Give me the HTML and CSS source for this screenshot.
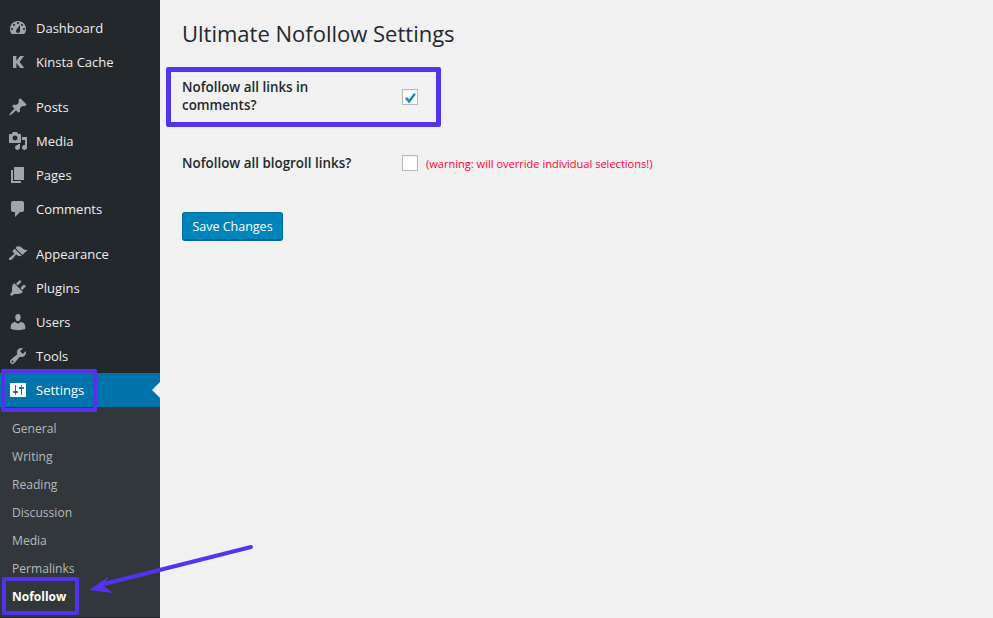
FILE: index.html
```html
<!DOCTYPE html>
<html lang="en">
<head>
<meta charset="utf-8">
<title>Ultimate Nofollow Settings</title>
<link rel="stylesheet" href="styles.css">
</head>
<body>
<div class="layout">
  <nav class="sidebar">
    <ul class="menu">
      <li class="item"><svg class="icon" viewBox="0 0 20 20"><path fill-rule="evenodd" d="M3.76 16h12.48c1.1-1.37 1.76-3.11 1.76-5 0-4.42-3.58-8-8-8s-8 3.58-8 8c0 1.89.66 3.63 1.76 5zM10 4c.55 0 1 .45 1 1s-.45 1-1 1-1-.45-1-1 .45-1 1-1zM6 6c.55 0 1 .45 1 1s-.45 1-1 1-1-.45-1-1 .45-1 1-1zm8 0c.55 0 1 .45 1 1s-.45 1-1 1-1-.45-1-1 .45-1 1-1zm-5.37 5.55L12 7v6c0 1.1-.9 2-2 2s-2-.9-2-2c0-.57.24-1.08.63-1.45zM4 10c.55 0 1 .45 1 1s-.45 1-1 1-1-.45-1-1 .45-1 1-1zm12 0c.55 0 1 .45 1 1s-.45 1-1 1-1-.45-1-1 .45-1 1-1z"/></svg><span>Dashboard</span></li>
      <li class="item"><svg class="icon" viewBox="0 0 20 20"><path d="M5 4h3.4v5L12 4h4l-4.4 6 4.6 6h-4L8.4 11v5H5z"/></svg><span>Kinsta Cache</span></li>
      <li class="sep"></li>
      <li class="item"><svg class="icon" viewBox="0 0 20 20"><path d="M10.44 3.02l1.82-1.82 6.36 6.35-1.83 1.82c-1.05-.68-2.48-.57-3.41.36l-.75.75c-.92.93-1.04 2.35-.35 3.41l-1.83 1.82-2.41-2.41-2.8 2.79c-.42.42-3.38 2.71-3.8 2.29s1.86-3.39 2.28-3.81l2.79-2.79L4.1 9.36l1.83-1.82c1.05.69 2.48.57 3.4-.36l.75-.75c.93-.92 1.05-2.35.36-3.41z"/></svg><span>Posts</span></li>
      <li class="item"><svg class="icon" viewBox="0 0 20 20"><path fill-rule="evenodd" d="M13 11V4c0-.55-.45-1-1-1h-1.67L9 1H5L3.67 3H2c-.55 0-1 .45-1 1v7c0 .55.45 1 1 1h10c.55 0 1-.45 1-1zM7 4.5c1.38 0 2.5 1.12 2.5 2.5S8.38 9.5 7 9.5 4.5 8.38 4.5 7 5.62 4.5 7 4.5zM14 6h5v10.5c0 1.38-1.12 2.5-2.5 2.5S14 17.88 14 16.5s1.12-2.5 2.5-2.5c.17 0 .34.02.5.05V9h-3V6zm-4 8.05V13h2v3.5c0 1.38-1.12 2.5-2.5 2.5S7 17.88 7 16.5 8.12 14 9.5 14c.17 0 .34.02.5.05z"/></svg><span>Media</span></li>
      <li class="item"><svg class="icon" viewBox="0 0 20 20"><path d="M6 15V2h10v13H6zm-1 1h8v2H3V5h2v11z"/></svg><span>Pages</span></li>
      <li class="item"><svg class="icon" viewBox="0 0 20 20"><path d="M5 2h9c1.1 0 2 .9 2 2v7c0 1.1-.9 2-2 2h-2l-5 5v-5H5c-1.1 0-2-.9-2-2V4c0-1.1.9-2 2-2z"/></svg><span>Comments</span></li>
      <li class="sep"></li>
      <li class="item"><svg class="icon" viewBox="0 0 20 20"><path d="M14.48 11.06L7.41 3.99l1.5-1.5c.5-.56 2.3-.47 3.51.32 1.21.8 1.43 1.28 2.91 2.1 1.18.64 2.45 1.26 4.45.85zm-.71.71L6.7 4.7 4.93 6.47c-.39.39-.39 1.02 0 1.41l1.06 1.06c.39.39.39 1.03 0 1.42-.6.6-1.43 1.11-2.21 1.69-.35.26-.7.53-1.01.84C1.43 13.23.4 14.98 1.2 15.8c.82.81 2.57-.23 3.91-1.57.31-.31.58-.66.84-1.01.58-.78 1.09-1.61 1.69-2.21.39-.39 1.02-.39 1.41 0l1.06 1.06c.39.39 1.02.39 1.41 0z"/></svg><span>Appearance</span></li>
      <li class="item"><svg class="icon" viewBox="0 0 20 20"><path d="M13.11 4.36L9.87 7.6 8 5.73l3.24-3.24c.35-.34 1.05-.2 1.56.32.52.51.66 1.21.31 1.55zm-8 1.77l.91-1.12 9.01 9.01-1.19.84c-.71.71-2.63 1.16-3.82 1.16H6.14L4.9 17.26c-.59.59-1.54.59-2.12 0-.59-.58-.59-1.53 0-2.12l1.24-1.24v-3.88c0-1.13.4-3.19 1.09-3.89zm7.26 3.97l3.24-3.24c.34-.35 1.04-.21 1.55.31.52.51.66 1.21.31 1.55l-3.24 3.25z"/></svg><span>Plugins</span></li>
      <li class="item"><svg class="icon" viewBox="0 0 20 20"><path d="M10 9.25c-2.27 0-2.73-3.44-2.73-3.44C7 4.02 7.82 2 9.97 2c2.16 0 2.98 2.02 2.71 3.81 0 0-.41 3.44-2.68 3.44zm0 2.57L12.72 10c2.39 0 4.52 2.33 4.52 4.53v2.49s-3.65 1.13-7.24 1.13c-3.65 0-7.24-1.13-7.24-1.13v-2.49c0-2.25 1.94-4.48 4.47-4.48z"/></svg><span>Users</span></li>
      <li class="item"><svg class="icon" viewBox="0 0 20 20"><path fill-rule="evenodd" d="M16.68 9.77c-1.34 1.34-3.3 1.67-4.95.99l-5.41 6.52c-.99.99-2.59.99-3.58 0s-.99-2.59 0-3.57l6.52-5.42c-.68-1.65-.35-3.61.99-4.95 1.28-1.28 3.12-1.62 4.72-1.06l-2.89 2.89 2.82 2.82 2.86-2.87c.53 1.58.18 3.39-1.08 4.65zM3.81 16.21c.4.39 1.04.39 1.43 0 .4-.4.4-1.04 0-1.43-.39-.4-1.03-.4-1.43 0-.39.39-.39 1.03 0 1.43z"/></svg><span>Tools</span></li>
      <li class="item current"><svg class="icon" viewBox="0 0 20 20"><path fill-rule="evenodd" d="M18 16V4c0-.55-.45-1-1-1H3c-.55 0-1 .45-1 1v12c0 .55.45 1 1 1h14c.55 0 1-.45 1-1zM8 11h1c.55 0 1 .45 1 1s-.45 1-1 1H8v1.5c0 .28-.22.5-.5.5s-.5-.22-.5-.5V13H6c-.55 0-1-.45-1-1s.45-1 1-1h1V5.5c0-.28.22-.5.5-.5s.5.22.5.5V11zm5-2h-1c-.55 0-1-.45-1-1s.45-1 1-1h1V5.5c0-.28.22-.5.5-.5s.5.22.5.5V7h1c.55 0 1 .45 1 1s-.45 1-1 1h-1v5.5c0 .28-.22.5-.5.5s-.5-.22-.5-.5V9z"/></svg><span>Settings</span></li>
    </ul>
    <ul class="submenu">
      <li>General</li>
      <li>Writing</li>
      <li>Reading</li>
      <li>Discussion</li>
      <li>Media</li>
      <li>Permalinks</li>
      <li class="sub-current">Nofollow</li>
    </ul>
  </nav>
  <main class="content">
    <h1 class="title">Ultimate Nofollow Settings</h1>
    <form class="form">
      <div class="row">
        <label class="label label-wrapped">Nofollow all links in comments?</label>
        <div class="field"><span class="check"><svg viewBox="0.5 -0.5 14 14" class="tick"><path d="M2.5 8.2l1.7-1.7 2.3 2.3 5-6.3 1.9 1.4-6.7 9z"/></svg></span></div>
      </div>
      <div class="row row-second">
        <label class="label">Nofollow all blogroll links?</label>
        <div class="field"><span class="check"></span><span class="warning">(warning: will override individual selections!)</span></div>
      </div>
      <button type="button" class="save">Save Changes</button>
    </form>
  </main>
</div>
<div class="mark mark-settings"></div>
<div class="mark mark-row"></div>
<div class="mark mark-sub"></div>
<svg class="arrow" viewBox="0 0 270 60" width="270" height="60"><path class="arrow-line" d="M251 7L100 45"/><path class="arrow-head" d="M89 50L108 37L104 46L113 53Z"/></svg>
</body>
</html>
```
FILE: styles.css
```css
* { box-sizing: border-box; }
html, body { margin: 0; padding: 0; height: 100%; overflow: hidden; }
body { background: #f1f1f1; color: #23282d; font-family: "Open Sans", "Noto Sans", sans-serif; font-size: 13px; position: relative; }
.layout { display: flex; height: 618px; }
.sidebar { width: 160px; flex: none; background: #23282d; padding-top: 11px; }
.menu, .submenu { list-style: none; margin: 0; padding: 0; }
.item { display: flex; align-items: center; height: 34px; padding-left: 8px; color: #eee; position: relative; }
.item span { margin-left: 8px; }
.icon { width: 20px; height: 20px; fill: #a0a5aa; flex: none; }
.sep { height: 11px; }
.current { background: #0073aa; color: #fff; }
.current .icon { fill: #fff; }
.current::after { content: ""; position: absolute; right: 0; top: 9px; border: 8px solid transparent; border-right-color: #f1f1f1; border-left-width: 0; }
.submenu { background: #32373c; padding: 8px 0 6px; }
.submenu li { height: 28px; line-height: 28px; padding-left: 12px; color: #b4b9be; font-size: 12.1px; }
.submenu .sub-current { color: #fff; font-weight: 700; font-size: 12px; }
.content { flex: 1; padding-left: 22px; }
.title { margin: 0; padding-top: 19px; font-size: 22px; line-height: 28px; font-weight: 400; color: #23282d; }
.row { display: flex; margin-top: 32px; align-items: center; }
.label { width: 220px; font-size: 13.4px; line-height: 18px; font-weight: 600; color: #23282d; flex: none; }
.label-wrapped { padding-right: 80px; padding-bottom: 1px; margin-top: -1px; }
.row-second { margin-top: 39px; }
.field { display: flex; align-items: center; }
.check { width: 16px; height: 16px; background: #fff; border: 1px solid #b4b9be; box-shadow: inset 0 1px 2px rgba(0,0,0,.07); display: block; }
.tick { display: block; width: 14px; height: 14px; fill: #1e8cbe; }
.warning { margin-left: 8px; color: #ff0033; font-size: 11.05px; }
.save { display: block; margin-top: 40px; width: 101px; height: 29px; padding: 1px 0 0; background: #0085ba; border: 1px solid #006799; border-bottom-width: 2px; border-radius: 3px; color: #fff; font-family: inherit; font-size: 12.5px; line-height: 24px; }
.mark { position: absolute; border: 4px solid #5333ed; border-radius: 2px; }
.mark-settings { left: 1px; top: 369px; width: 96px; height: 43px; }
.mark-row { left: 166px; top: 67px; width: 275px; height: 60px; border-width: 5px; }
.mark-sub { left: 2px; top: 577px; width: 77px; height: 38px; }
.arrow { position: absolute; left: 0; top: 540px; }
.arrow-line { stroke: #5333ed; stroke-width: 4; stroke-linecap: round; fill: none; }
.arrow-head { fill: #5333ed; }
```
